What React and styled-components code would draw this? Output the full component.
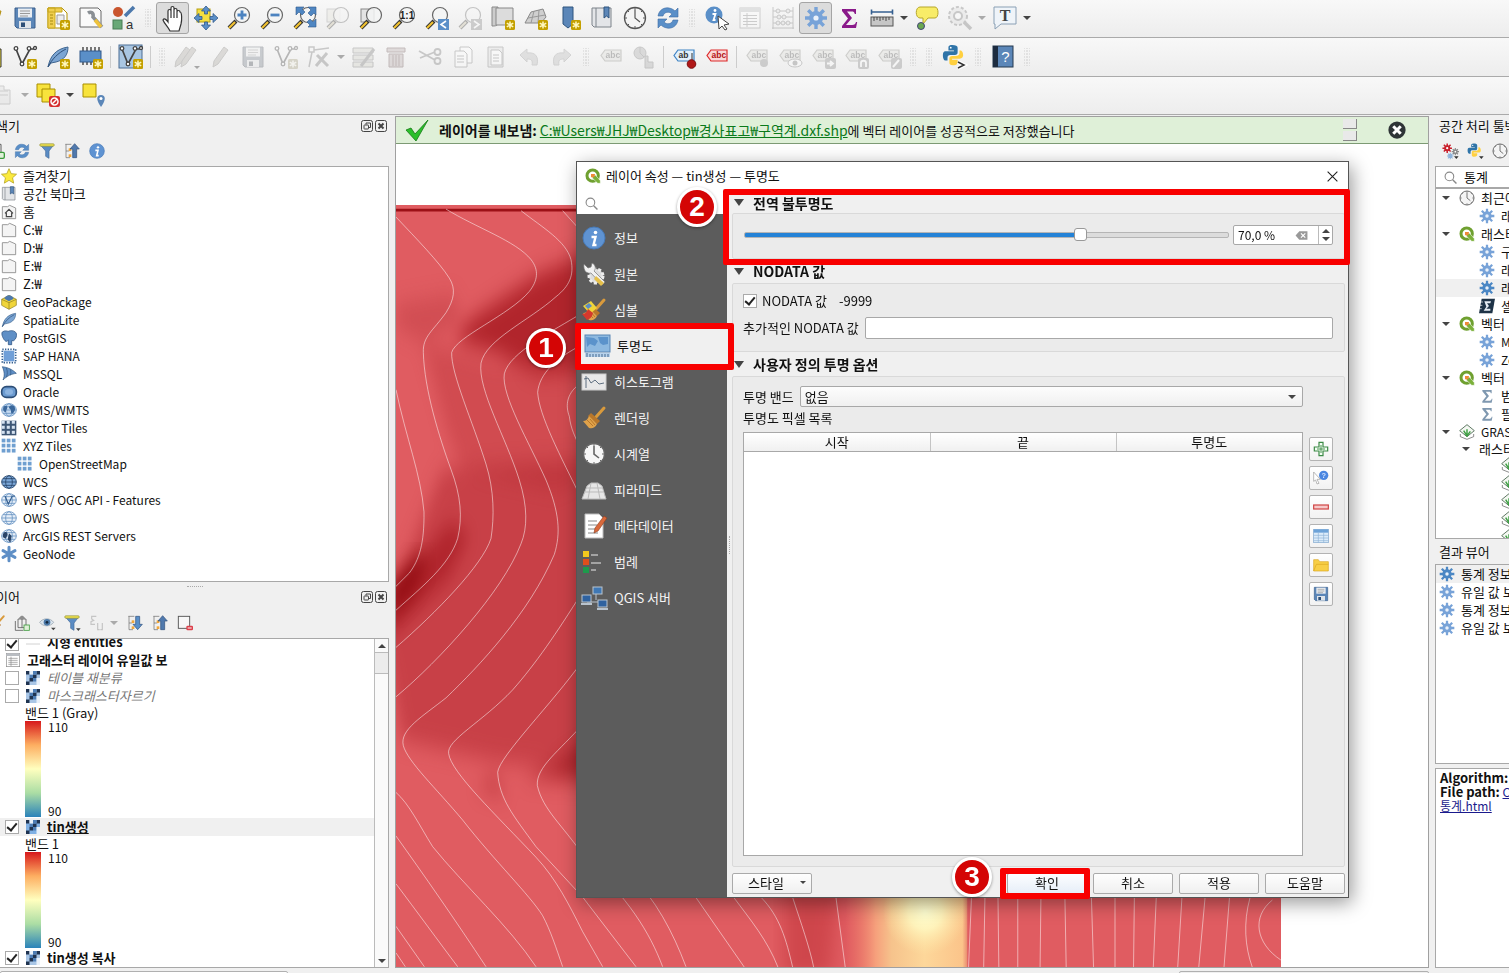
import styled, { createGlobalStyle, css } from 'styled-components';

const GlobalStyle = createGlobalStyle`
	* {
		box-sizing: border-box;
	}

	body {
		margin: 0;
		overflow: hidden;
		background: #f0f0f0;
	}

	body, button, input, select, table {
		font-family: 'Noto Sans CJK KR', 'Liberation Sans', sans-serif;
		font-size: 13px;
		line-height: 18px;
		color: #111;
	}

	button {
		padding: 0;
		border: 0;
		background: none;
	}
`;

/* ---------- icons ---------- */

const Svg = styled.svg`
	display: block;
	flex: none;
	overflow: visible;
	width: ${({ $size }) => $size}px;
	height: ${({ $size }) => $size}px;
	${({ $dim }) =>
		$dim &&
		css`
			filter: grayscale(0.8);
			opacity: 0.35;
		`}

	text {
		font-family: 'Liberation Sans', sans-serif;
	}
`;

const NewBadge = () => (
	<g>
		<rect x='14' y='14' width='10' height='10' rx='1.5' fill='#c4a000' />
		<path d='M19 15.5v7M15.8 17.2l6.4 3.6M22.2 17.2l-6.4 3.6' stroke='#fff8c0' strokeWidth='1.5' />
	</g>
);

const Lens = ({ children }) => (
	<g>
		<path d='M9 15l-7 7' stroke='#333' strokeWidth='4' />
		<path d='M8 16l-6 6' stroke='#f2c230' strokeWidth='2.2' />
		<circle cx='15' cy='9' r='7.5' fill='#f3f5f5' fillOpacity='.85' stroke='#666' strokeWidth='1.2' />
		{children}
	</g>
);

const Gear = ({ fill = '#6d9bd3', hole = '#fff' }) => (
	<g stroke={fill}>
		<path d='M12 1v22M1 12h22M4.2 4.2l15.6 15.6M19.8 4.2L4.2 19.8' strokeWidth='3.4' />
		<circle cx='12' cy='12' r='7' fill={fill} stroke='none' />
		<circle cx='12' cy='12' r='2.6' fill={hole} stroke='none' />
	</g>
);

const Refresh = () => (
	<g fill='#5a8fc8' stroke='#3c6ca5' strokeWidth='.6'>
		<path d='M2 10C3 4 8 1 13 2c3 .5 5 2 6 3l3-3v9h-9l3-3C13 5 8 6 7 10z' />
		<path d='M22 14c-1 6-6 9-11 8-3-.5-5-2-6-3l-3 3v-9h9l-3 3c3 3 8 2 9-2z' />
	</g>
);

const Python = () => (
	<g>
		<path
			d='M11 1C7 1 7 3 7 4v3h6v1H4c-3 0-3 3-3 5s1 5 3 5h2v-3c0-2 1-3 3-3h5c2 0 3-1 3-3V4c0-2-2-3-6-3z'
			fill='#2f74a8'
		/>
		<path
			d='M12 23c4 0 5-2 5-3v-3h-6v-1h8c3 0 4-2 4-4s-1-5-3-5h-1v3c0 2-2 3-4 3h-4c-2 0-3 1-3 3v4c0 2 1 3 4 3z'
			fill='#ffd040'
		/>
		<circle cx='9.500' cy='4' r='1' fill='#fff' />
	</g>
);

const Label = ({ fill = '#dcdcc4', stroke = '#8c8c6c', text = 'abc', color = '#555' }) => (
	<g>
		<path d='M6 5h16v11H6l-4-5.500z' fill={fill} stroke={stroke} strokeWidth='1.2' />
		<text x='6.500' y='13' fontSize='8.500' fontWeight='bold' fill={color}>
			{text}
		</text>
	</g>
);

const Globe = ({ fill = '#e7eff8', dark }) => (
	<g fill='none' stroke={dark ? '#27466b' : '#6b95c4'} strokeWidth='1.3'>
		<ellipse cx='12' cy='12' rx='11' ry='9.500' fill={fill} />
		<ellipse cx='12' cy='12' rx='5' ry='9.500' />
		<path d='M1 12h22M3 7h18M3 17h18' />
	</g>
);

const TreeLines = () => (
	<g fill='#f3a73a' stroke='#666' strokeWidth='1'>
		<path d='M2 2h9M3 2v20h6M3 12h5' fill='none' />
		<rect x='7' y='8' width='4' height='4' stroke='none' />
		<rect x='7' y='17' width='4' height='4' stroke='none' />
	</g>
);

const Floppy = ({ fill = '#5b86b8' }) => (
	<g>
		<path d='M2 2h20v20H4l-2-2z' fill={fill} stroke='#3a5f8c' />
		<rect x='5' y='2.500' width='14' height='9' fill='#e9edf2' />
		<path d='M7 5h10M7 7.500h10M7 10h8' stroke='#999' />
		<rect x='6' y='15' width='12' height='7' fill='#dfe4ea' />
		<rect x='8' y='16.500' width='4' height='4.500' fill='#2d4f78' />
	</g>
);

const Brush = () => (
	<g>
		<path d='M22 2l-8 9' stroke='#d99a3c' strokeWidth='3' strokeLinecap='round' />
		<path d='M9 7l9 8-3 3-9-8z' fill='#b9772a' />
		<path d='M7 10l8 8c-2 4-5 5-8 4l-6-7c3 0 5-2 6-5z' fill='#e0a24a' />
		<path d='M5 14l6 6M8 13l5 6' stroke='#b9772a' />
	</g>
);

const Clock = ({ fill = '#f4f4f4', stroke = '#555', width = 1.6 }) => (
	<g fill='none' stroke={stroke}>
		<circle cx='12' cy='12' r='10.500' fill={fill} strokeWidth='1.3' />
		<path d='M12 4v8l5 4' strokeWidth={width} />
		<path d='M12 2v2M12 20v2M2 12h2M20 12h2M5 5l1 1M18 18l1 1M19 5l-1 1M6 18l-1 1' />
	</g>
);

const Info = () => (
	<g>
		<circle cx='12' cy='12' r='11' fill='#5f93d2' stroke='#477ab8' />
		<circle cx='13.500' cy='6.500' r='1.800' fill='#fff' />
		<path d='M9.500 11h4l-2 8h3' fill='none' stroke='#fff' strokeWidth='2.400' />
	</g>
);

const Q = () => (
	<g>
		<circle cx='11.500' cy='11.500' r='8.500' fill='#fff' stroke='#6fa030' strokeWidth='4.500' />
		<path d='M11 11h5l7 8v4h-4l-8-8z' fill='#7bb03a' stroke='#fff' strokeWidth='.8' />
		<path d='M9 9h6l-1 5h-5z' fill='#ee8a3a' />
	</g>
);

const Tiles = ({ gap = 2, fill = '#6f9fd0' }) => (
	<g fill={fill}>
		{[0, 1, 2].map((r) =>
			[0, 1, 2].map((c) => (
				<rect key={`${r}${c}`} x={1 + c * 7.6} y={1 + r * 7.6} width={7.6 - gap} height={7.6 - gap} />
			)),
		)}
	</g>
);

const Leaf = () => (
	<g>
		<path d='M12 1l11 9-11 9-11-9z' fill='#f4f8f2' stroke='#55705a' strokeWidth='1.4' />
		<path d='M12 19V8M12 18L7 10M12 18l5-7' fill='none' stroke='#3fa044' strokeWidth='2.200' />
		<path d='M2 15v4l10 4 10-4v-4' fill='none' stroke='#555' />
	</g>
);

const Feather = () => (
	<g>
		<path d='M2 22C4 12 9 4 22 2c0 8-4 13-12 15l-5 1z' fill='#7ba5d3' stroke='#3f658f' />
		<path d='M2 22C6 14 12 8 20 4' fill='none' stroke='#2d4f78' />
	</g>
);

const VShape = () => (
	<g fill='#fff' stroke='#444' strokeWidth='1.300'>
		<path d='M3 4l6 15 8-15 5 0' fill='none' strokeWidth='1.700' />
		<circle cx='3' cy='3.500' r='1.800' />
		<circle cx='9' cy='19' r='1.800' />
		<circle cx='16' cy='3.500' r='1.800' />
		<circle cx='22' cy='3' r='1.500' />
	</g>
);

const Raster = ({ light = '#a9c6e6' }) => (
	<g>
		<rect width='24' height='24' fill={light} />
		<path d='M0 0h6v6H0zM12 6h6v6h-6zM6 12h6v6H6zM18 0h6v6h-6zM0 18h6v6H0z' fill='#1f3350' />
		<path d='M6 6h6v6H6zM12 12h6v6h-6zM12 0h6v6h-6z' fill='#4d7db5' />
		<path d='M6 0h6v6H6zM18 12h6v12h-6z' fill='#e9f1fa' />
	</g>
);

const Funnel = () => (
	<g>
		<path d='M2 3h20l-7 9v11l-5-3v-8z' fill='#5b8cc4' stroke='#41699a' />
		<rect x='1' y='1' width='22' height='4' rx='2' fill='#e3d84c' stroke='#8b8b3c' strokeWidth='.8' />
	</g>
);

const Book = () => (
	<g>
		<path d='M2 2h19v19H4l-2-2z' fill='#e3e5e8' stroke='#7d838a' />
		<path d='M6 2v19' stroke='#7d838a' />
		<path d='M14 1h5v11l-2.500-2-2.500 2z' fill='#5b86b8' stroke='#2f557f' />
	</g>
);

const Pencil = ({ x = 0 }) => (
	<path d={`M${5 + x} 22l1-6L${16 + x} 2l4 3-10 14z`} fill='#b9a98b' stroke='#8b8070' />
);

const Sheet = () => (
	<g>
		<rect x='2' y='2' width='20' height='20' fill='#fff' stroke='#888' />
		<rect x='2' y='2' width='20' height='4' fill='#b9bdc2' />
		<path d='M5 9.500h14M5 12.500h14M5 15.500h14M5 18.500h14M9 7v14' stroke='#888' />
	</g>
);

const Sigma = ({ fill = '#8a1a8a' }) => (
	<path
		d='M5 3h14v5h-1.200c-.5-2-1.300-2.500-3-2.500H10l5 6.500-6 7h6c2.500 0 3.500-1 4-3h1.200L19 22H5v-2l6-7.500L5 5z'
		fill={fill}
	/>
);

const Folder = ({ children }) => (
	<g>
		<path d='M2 4h8l3-2 9 4v16H2z' fill='#f4f4f4' stroke='#8b8b8b' strokeWidth='1.300' />
		{children}
	</g>
);

const ICONS = {
	folder: <path d='M2 5h20l-4 14H2z' fill='#eec73e' stroke='#b08d10' />,
	save: <Floppy />,
	layoutNew: (
		<g>
			<path d='M2 2h14l5 5v15H2z' fill='#fff' stroke='#b39200' />
			<path d='M2 2h7v20H2zM2 2h14v4H2z' fill='#f0cf50' stroke='#c9a820' />
			<path d='M4 9h3M4 12h3M4 15h3M4 18h3' stroke='#a58a10' />
			<path d='M11 9h7v9h-7z' fill='#eee' stroke='#999' />
			<NewBadge />
		</g>
	),
	layoutManager: (
		<g>
			<path d='M1 2h18l3 3v16H1z' fill='#fafafa' stroke='#666' />
			<path d='M9 7c3-2 6 0 5 4l9 10' fill='none' stroke='#8a8f94' strokeWidth='3.500' />
			<path d='M16 14l6 7' stroke='#eec23c' strokeWidth='3.500' />
		</g>
	),
	style: (
		<g>
			<circle cx='6' cy='6' r='5' fill='#c9552e' />
			<rect x='1' y='14' width='9' height='9' fill='#69a877' stroke='#497c55' />
			<path d='M13 10l9-9' stroke='#4d79ac' strokeWidth='3.500' />
			<text x='14' y='23' fontSize='13' fill='#333'>
				a
			</text>
		</g>
	),
	hand: (
		<path
			d='M7 14V5c0-2 3-2 3 0V2c0-2 3-2 3 0v2c0-2 3-2 3 0v2c0-2 3-2 3 0 2 0 2 8 1 12l-2 7H9c-2-4-6-8-7-11 1-2 3-1 5 2zM10 5v7M13 4v8M16 6v6'
			fill='#fff'
			stroke='#333'
			strokeWidth='1.200'
		/>
	),
	pan: (
		<g>
			<rect x='3' y='3' width='13' height='13' fill='#f5df40' stroke='#b59f10' />
			<path
				d='M12 0l4.500 5h-3v3h-3V5h-3zM12 24l4.500-5h-3v-3h-3v3h-3zM0 12l5-4.500v3h3v3H5v3zM24 12l-5-4.500v3h-3v3h3v3z'
				fill='#5a8fc8'
				stroke='#31598a'
				strokeWidth='.8'
			/>
		</g>
	),
	zoomIn: (
		<Lens>
			<path d='M15 4.500v9M10.500 9h9' stroke='#4c83c0' strokeWidth='2.800' />
		</Lens>
	),
	zoomOut: (
		<Lens>
			<path d='M10.500 9h9' stroke='#4c83c0' strokeWidth='2.800' />
		</Lens>
	),
	zoomFull: (
		<g>
			<Lens />
			<path
				d='M3 1h8L9 3l3 3-3 3-3-3-3 3zM23 1v8l-2-2-3 3-3-3 3-3-3-3zM23 21h-8l2-2-3-3 3-3 3 3 3-3z'
				fill='#4f86c2'
				stroke='#31598a'
				strokeWidth='.6'
			/>
		</g>
	),
	zoomSelection: (
		<g>
			<rect x='1' y='3' width='13' height='13' fill='#e8e4b8' stroke='#999' />
			<Lens />
		</g>
	),
	zoomLayer: (
		<g>
			<rect x='2' y='3' width='13' height='13' fill='#e3e3e3' stroke='#888' />
			<Lens />
		</g>
	),
	zoomNative: (
		<Lens>
			<text x='15' y='12.500' fontSize='10' fontWeight='bold' textAnchor='middle' fill='#222'>
				1:1
			</text>
		</Lens>
	),
	zoomLast: (
		<g>
			<Lens />
			<rect x='13' y='13' width='11' height='11' fill='#5a8fc8' />
			<path d='M21 15l-5 3.500 5 3.500' fill='none' stroke='#fff' strokeWidth='1.600' />
		</g>
	),
	zoomNext: (
		<g>
			<Lens />
			<rect x='13' y='13' width='11' height='11' fill='#888' />
			<path d='M16 15l5 3.500-5 3.500' fill='none' stroke='#fff' strokeWidth='1.600' />
		</g>
	),
	mapNew: (
		<g>
			<path d='M1 1h6v16c0 3-3 3-6 3z' fill='#ccc' stroke='#888' />
			<path d='M5 2h17v17H5z' fill='#dcdcdc' stroke='#888' />
			<NewBadge />
		</g>
	),
	view3dNew: (
		<g>
			<path d='M7 6l12-3 3 8-5 6-16 0z' fill='#cfcfcf' stroke='#888' />
			<path d='M4 12l17-3M10 5l-3 12M15 4l-1 13' stroke='#999' />
			<NewBadge />
		</g>
	),
	bookmarkNew: (
		<g>
			<path d='M6 1h10v17l-5 4-5-4z' fill='#5b86b8' stroke='#2f557f' />
			<NewBadge />
		</g>
	),
	bookmarks: <Book />,
	clock: <Clock width={1.2} />,
	refresh: <Refresh />,
	identify: (
		<g>
			<circle cx='9' cy='9' r='8.500' fill='#5a8fc8' />
			<circle cx='10' cy='4.500' r='1.400' fill='#fff' />
			<path d='M7.500 8h3l-2 6h2' fill='none' stroke='#fff' strokeWidth='1.800' />
			<path d='M13 10l11 8-5 1 3 4-2 1-3-4-3 3z' fill='#fff' stroke='#444' />
		</g>
	),
	table: <Sheet />,
	abacus: (
		<g fill='#ddd' stroke='#777'>
			<path d='M2 1v22M22 1v22M2 5h20M2 11h20M2 17h20M1 22h22' fill='none' />
			<circle cx='7' cy='5' r='2' />
			<circle cx='17' cy='5' r='2' />
			<circle cx='8' cy='11' r='2' />
			<circle cx='13' cy='11' r='2' />
			<circle cx='7' cy='17' r='2' />
			<circle cx='12' cy='17' r='2' />
			<circle cx='17' cy='17' r='2' />
		</g>
	),
	gear: <Gear fill='#78a3d8' hole='#eaf1fa' />,
	gearStrong: <Gear fill='#4b87c4' hole='#eaf1fa' />,
	sigma: <Sigma />,
	sigmaBlue: <Sigma fill='#7f98b0' />,
	measure: (
		<g>
			<path d='M1 6h22M1.500 3.500v5M22.500 3.500v5' stroke='#355f90' strokeWidth='1.600' />
			<rect x='1' y='11' width='22' height='9' fill='#c6c6c6' stroke='#555' />
			<path d='M4 11v4M7 11v3M10 11v4M13 11v3M16 11v4M19 11v3' stroke='#444' />
		</g>
	),
	tips: (
		<g>
			<path d='M5 1h15c4 0 4 11 0 11h-7l-5 6 0-6H5c-5 0-5-11 0-11z' fill='#f8ec68' stroke='#b6a72a' />
			<circle cx='6' cy='20' r='3.500' fill='#6aa84f' stroke='#447' />
		</g>
	),
	zoomGear: (
		<g>
			<path d='M15 15l8 8' stroke='#777' strokeWidth='3.500' />
			<circle cx='10' cy='10' r='9' fill='#ddd' stroke='#777' strokeWidth='2' strokeDasharray='3 2' />
			<circle cx='10' cy='10' r='4' fill='#fff' stroke='#777' strokeWidth='2' />
		</g>
	),
	textNote: (
		<g>
			<path d='M1 1h22v17H8l-6 5v-5H1z' fill='#eff4f9' stroke='#8aa0b5' />
			<text
				x='12'
				y='15'
				fontSize='16'
				fontWeight='bold'
				textAnchor='middle'
				fill='#444'
				style={{ fontFamily: 'Liberation Serif' }}
			>
				T
			</text>
		</g>
	),
	layerYellow: <path d='M2 4h20v18H2z' fill='#f2df3e' stroke='#333' />,
	vectorNew: (
		<g>
			<VShape />
			<NewBadge />
		</g>
	),
	featherNew: (
		<g>
			<Feather />
			<NewBadge />
		</g>
	),
	chipNew: (
		<g>
			<path d='M4 2v18M8 2v18M12 2v18M16 2v18M20 2v18' stroke='#333' strokeWidth='1.300' />
			<rect x='1' y='6' width='21' height='11' fill='#5a8fc8' stroke='#31598a' />
			<NewBadge />
		</g>
	),
	virtualNew: (
		<g>
			<rect x='0' y='0' width='23' height='23' fill='#a9c6e2' stroke='#4a6d94' />
			<VShape />
			<NewBadge />
		</g>
	),
	pencils: (
		<g>
			<Pencil x={-5} />
			<Pencil x={1} />
			<path d='M19 21h6l-3 3z' fill='#222' />
		</g>
	),
	pencil: <Pencil />,
	vertex: (
		<g fill='none' stroke='#777' strokeWidth='1.500'>
			<path d='M2 2h5v5H2zM7 5l15-2M5 7L2 22' />
			<path d='M20 8L9 21M10 10l11 11' strokeWidth='3' />
		</g>
	),
	modify: (
		<g>
			<path d='M1 3h20v5H1zM1 10h20v5H1zM1 17h20v5H1z' fill='#d5d3a8' stroke='#777' />
			<path d='M9 21L22 4' stroke='#777' strokeWidth='3' />
		</g>
	),
	trash: (
		<g fill='#e0a0a0' stroke='#b04040'>
			<path d='M2 3h18v4H2zM4 9h14v13H4z' />
			<path d='M8 10v11M11 10v11M14 10v11' />
		</g>
	),
	cut: (
		<g fill='none' stroke='#777' strokeWidth='1.800'>
			<path d='M1 6l16 9M2 13l15-6' />
			<circle cx='19.500' cy='7' r='3' />
			<circle cx='19.500' cy='16' r='3' />
		</g>
	),
	copy: (
		<g fill='#fff' stroke='#777'>
			<path d='M9 2h9l3 3v13H9z' />
			<path d='M4 6h9l3 3v13H4zM6 11h7M6 14h7M6 17h7' />
		</g>
	),
	paste: (
		<g fill='#fff' stroke='#777'>
			<path d='M4 2h15v20H4z' fill='#ddd' />
			<path d='M7 5h8l3 3v12H7zM9 10h6M9 13h6M9 16h6' />
		</g>
	),
	undo: <path d='M3 10l7-6v4c8-1 12 3 10 12h-5c1-5-1-6-5-6v3z' fill='#bbb' stroke='#999' />,
	redo: <path d='M21 10l-7-6v4c-8-1-12 3-10 12h5c-1-5 1-6 5-6v3z' fill='#bbb' stroke='#999' />,
	label: <Label />,
	diagram: (
		<g fill='#aaa' stroke='#777'>
			<circle cx='8' cy='8' r='6' />
			<path d='M8 8V2M8 8l4 4' />
			<path d='M13 11h3v6h5v6h-8z' />
		</g>
	),
	labelPin: (
		<g>
			<Label fill='#e3f0fb' stroke='#3f83c4' text='ab' color='#333' />
			<path d='M20 8v9' stroke='#333' />
			<circle cx='19.500' cy='19' r='4.300' fill='#b01818' stroke='#7c0e0e' />
		</g>
	),
	labelRed: <Label fill='#f9d8d8' stroke='#dd2a2a' color='#b41414' />,
	labelPinGrey: (
		<g>
			<Label />
			<circle cx='19' cy='18' r='4' fill='#888' />
		</g>
	),
	labelEye: (
		<g>
			<Label />
			<ellipse cx='17' cy='18' rx='7' ry='4' fill='#fff' stroke='#777' />
			<circle cx='17' cy='18' r='2.500' fill='#777' />
		</g>
	),
	labelBox: (
		<g>
			<Label />
			<rect x='14' y='13' width='11' height='11' rx='2' fill='#888' />
			<path d='M16 18.500h6M19 16l3 2.500-3 2.500' fill='none' stroke='#fff' strokeWidth='1.800' />
		</g>
	),
	labelTurn: (
		<g>
			<Label />
			<rect x='14' y='13' width='11' height='11' rx='2' fill='#888' />
			<path d='M17 22v-4c0-3 5-3 5 0v4' fill='none' stroke='#fff' strokeWidth='1.800' />
		</g>
	),
	labelEdit: (
		<g>
			<Label />
			<rect x='14' y='13' width='11' height='11' rx='2' fill='#888' />
			<path d='M16 22l6-7' stroke='#fff' strokeWidth='2' />
		</g>
	),
	python: <Python />,
	pythonConsole: (
		<g>
			<g transform='translate(0 -1) scale(.92)'>
				<Python />
			</g>
			<path d='M16 17l6 3-6 3' fill='none' stroke='#fff' strokeWidth='4' />
			<path d='M16 17l6 3-6 3' fill='none' stroke='#333' strokeWidth='1.500' />
		</g>
	),
	help: (
		<g>
			<rect x='2' y='1' width='20' height='21' fill='#5b86b8' stroke='#24384f' />
			<rect x='2' y='1' width='5' height='21' fill='#1d2c40' />
			<text x='14.500' y='17' fontSize='15' textAnchor='middle' fill='#fff'>
				?
			</text>
		</g>
	),
	stackGrey: <path d='M0 3h14v4h6v14H2v-4H0zM2 8h16M2 12h16' fill='#ddd' stroke='#888' />,
	deselect: (
		<g>
			<path d='M1 1h13v13H1z' fill='#f8e33c' stroke='#a98f00' />
			<path d='M6 6h13v13H6z' fill='#f8e33c' stroke='#a98f00' />
			<rect x='13' y='13' width='11' height='11' rx='2' fill='#d53030' />
			<circle cx='18.500' cy='18.500' r='3.500' fill='none' stroke='#fff' strokeWidth='1.500' />
			<path d='M16 21l5-5' stroke='#fff' strokeWidth='1.500' />
		</g>
	),
	selectPlace: (
		<g>
			<path d='M2 1h13v13H2z' fill='#f8e33c' stroke='#a98f00' />
			<path d='M20 12c5 0 5 5 0 12-5-7-5-12 0-12z' fill='#5b86b8' />
			<circle cx='20' cy='15.500' r='1.500' fill='#fff' />
		</g>
	),
	addGreen: (
		<g>
			<path d='M6 2h12v18H6' fill='#f4f4f4' stroke='#555' strokeWidth='1.400' />
			<rect x='14' y='14' width='9' height='9' rx='2' fill='#dff0d8' stroke='#3b9a3b' strokeWidth='2' />
		</g>
	),
	funnel: <Funnel />,
	collapse: (
		<g>
			<TreeLines />
			<path d='M16 1l7 8h-4v13h-6V9H9z' fill='#5079ad' stroke='#2f4f7a' />
		</g>
	),
	expand: (
		<g>
			<TreeLines />
			<path d='M16 22l7-8h-4V2h-6v12H9z' fill='#5a8fc8' stroke='#2f4f7a' />
		</g>
	),
	info: <Info />,
	star: (
		<path
			d='M12 1l3.300 7.500 8 .8-6 5.400 1.700 8L12 18.500 5 22.700l1.700-8-6-5.400 8-.8z'
			fill='#fbea3e'
			stroke='#b5a322'
			strokeWidth='1.200'
		/>
	),
	home: (
		<Folder>
			<path d='M6 14l6-6 6 6M8 13v6h8v-6' fill='none' stroke='#444' strokeWidth='1.800' />
		</Folder>
	),
	drive: <Folder />,
	geopackage: (
		<g>
			<path d='M1 8l11-6 11 6v9l-11 6-11-6z' fill='#f0d53a' stroke='#8b7a20' />
			<path d='M12 13v10M1 8l11 5 11-5' fill='none' stroke='#8b7a20' />
			<path d='M5 7c2-7 12-7 14 0l-7 4z' fill='#4d79ac' />
		</g>
	),
	feather: <Feather />,
	postgis: (
		<path
			d='M2 3c4-3 7-1 9-1 4-2 10-1 12 3 1 5-1 9-4 11l-3 0v6h-5v-7c-2 2-3 3-5 1C3 13 0 6 2 3z'
			fill='#5f8fc6'
			stroke='#365d8c'
			strokeWidth='1.300'
		/>
	),
	hana: (
		<g>
			<rect x='2' y='2' width='20' height='20' fill='none' stroke='#355f90' strokeWidth='2.500' strokeDasharray='2 2' />
			<rect x='4' y='4' width='16' height='16' fill='#6f9fd8' />
		</g>
	),
	mssql: (
		<path
			d='M2 1c9 1 16 5 21 10-7 1-13 3-20 10 3-7 2-13-1-20zM8 3c2 5 2 9 0 14M14 5c1 3 1 6 0 9'
			fill='#5f8fc6'
			stroke='#2f557f'
		/>
	),
	oracle: (
		<g>
			<rect x='1' y='4' width='22' height='16' rx='7' fill='#6c9bd0' stroke='#2c4d76' strokeWidth='2.500' />
			<rect x='6' y='8' width='12' height='8' rx='4' fill='#8db4e0' />
		</g>
	),
	wms: (
		<g>
			<Globe fill='#c6daf0' />
			<path d='M4 7c4-3 7 0 5 3s-1 6-3 5-4-5-2-8zM13 6c5-3 9 1 8 6-2 4-3 6-5 5s0-4-2-6-3-3-1-5z' fill='#3b689c' />
		</g>
	),
	vectorTiles: (
		<g>
			<rect x='1' y='1' width='22' height='22' fill='#3d5675' />
			<Tiles gap={3} fill='#d5e2f0' />
		</g>
	),
	xyz: <Tiles />,
	wcs: <Globe fill='#7ba7d8' dark />,
	wfs: (
		<g>
			<Globe />
			<path d='M6 6l5 12 6-12h4' fill='none' stroke='#355f90' strokeWidth='1.800' />
		</g>
	),
	ows: <Globe />,
	arcgis: (
		<g>
			<Globe />
			<path d='M3 9c3-5 7-3 7 1l-3 6-4-2zM12 8l4 4-2 10-4-5z' fill='#2b4568' />
		</g>
	),
	geonode: (
		<path d='M12 2v20M3 7l18 10M21 7L3 17' stroke='#5f8fc6' strokeWidth='4.500' strokeLinecap='round' />
	),
	brush: <Brush />,
	addGroup: (
		<g fill='none' stroke='#555' strokeWidth='1.200'>
			<path d='M2 9v14h12M6 6v13h12V6zM9 6V3h6v3M12 1v18' />
			<rect x='15' y='15' width='8' height='8' fill='#dff0d8' stroke='#3b9a3b' />
		</g>
	),
	eye: (
		<g>
			<path d='M1 11C6 4 17 4 22 11c-5 7-16 7-21 0z' fill='#dbe5ee' stroke='#8a98a5' />
			<circle cx='12' cy='11' r='5' fill='#4a78a8' />
			<circle cx='12' cy='11' r='2' fill='#16283c' />
			<path d='M18 19h7l-3.500 4z' fill='#444' />
		</g>
	),
	funnelMenu: (
		<g>
			<Funnel />
			<path d='M18 20h7l-3.500 4z' fill='#444' />
		</g>
	),
	expression: (
		<g fill='none' stroke='#777' strokeWidth='1.800'>
			<path d='M11 2H4v4l3 2-4 2v4h6M13 12v10h3M20 12v10h-3' />
		</g>
	),
	removeLayer: (
		<g>
			<rect x='2' y='2' width='17' height='18' fill='#f7f7f7' stroke='#555' strokeWidth='1.400' />
			<rect x='14' y='16' width='10' height='7' rx='2' fill='#dc3f4a' />
			<path d='M16 19.500h6' stroke='#fff' strokeWidth='1.500' />
		</g>
	),
	raster: <Raster />,
	rasterActive: <Raster light='#7fb0e4' />,
	line: <path d='M0 12h24' stroke='#ccc' strokeWidth='1.500' />,
	check: <path d='M1 12l5-2 4 6L23 2 11 23z' fill='#2bbf2b' stroke='#157a15' strokeWidth='.8' />,
	q: <Q />,
	search: (
		<g fill='none' stroke='#888' strokeWidth='2'>
			<circle cx='10' cy='10' r='8' />
			<path d='M16 16l7 7' strokeWidth='2.600' />
		</g>
	),
	source: (
		<g>
			<circle cx='14' cy='14' r='7' fill='#ddd' stroke='#eee' strokeWidth='3' strokeDasharray='3 2' />
			<path
				d='M2 2l4 4 3-1 1-4c4 2 4 6 2 8l11 11-3 3L9 11C5 12 1 9 2 2z'
				fill='#f1f1f1'
				stroke='#777'
				strokeWidth='.7'
			/>
			<path d='M14 14l8 7-3 3-7-7z' fill='#e6c04a' />
		</g>
	),
	symbol: (
		<g>
			<Brush />
			<path d='M1 8l8-5 6 7-7 6z' fill='#efd43a' />
			<path d='M0 16c3 0 5-2 6-5l5 4c-1 4-3 6-6 7z' fill='#d5392d' />
			<path d='M3 8l4-3 3 3-4 3z' fill='#5b8cc4' />
		</g>
	),
	transparency: (
		<g>
			<rect x='0' y='1' width='25' height='17' fill='#8db9e0' stroke='#5885b4' />
			<path d='M1 3l8 1 4 3-3 5-5-2-3 3zM13 3h10v7l-5 1-3-2z' fill='#5b93cb' />
			<path d='M0 19h25v4H0z' fill='#b9d3ec' />
			<path d='M2 19v4M5 20v3M8 20v3M11 20v3M14 20v3M17 20v3M20 20v3M23 20v3' stroke='#44688f' />
		</g>
	),
	histogram: (
		<g>
			<rect x='0' y='4' width='24' height='16' fill='#e8e8e8' stroke='#ccc' />
			<path d='M4 6v12M2 9l4-1 3 5 4-3 4 4 5-1' fill='none' stroke='#5f6f80' />
		</g>
	),
	clockWhite: <Clock fill='#f6f6f6' stroke='#666' />,
	pyramids: (
		<g>
			<path d='M5 8l4-3h7l4 3 4 13H0z' fill='#e6e6e6' stroke='#bbb' />
			<path d='M3 14h18M9 5l-3 16M15 5l3 16M4 10h16' stroke='#bbb' />
		</g>
	),
	metadata: (
		<g>
			<path d='M3 0h14l4 4v20H3z' fill='#fff' stroke='#bbb' />
			<path d='M6 7h9M6 11h9M6 15h7M6 19h10' stroke='#888' />
			<path d='M22 2l3 2-9 13-4 2 1-5z' fill='#d9693c' stroke='#8b3c1c' strokeWidth='.6' />
		</g>
	),
	legend: (
		<g>
			<rect x='1' y='1' width='6' height='6' fill='#f2c81e' />
			<rect x='1' y='9' width='6' height='6' fill='#e04e1c' />
			<rect x='1' y='17' width='6' height='6' fill='#1e9a4c' />
			<path d='M9 5h7M9 13h10M9 20h5' stroke='#bbb' strokeWidth='1.600' />
		</g>
	),
	server: (
		<g stroke='#b9c3cd'>
			<path d='M14 8v6M5 16h14' />
			<rect x='11' y='1' width='9' height='7' fill='#3f78b5' />
			<rect x='0' y='9' width='9' height='7' fill='#2f62a0' />
			<rect x='16' y='14' width='9' height='7' fill='#2f62a0' />
			<path d='M-1 18h11M15 23h11' strokeWidth='2' />
		</g>
	),
	plus: (
		<g fill='none' stroke='#3c8a46'>
			<path d='M9 2h6v7h7v6h-7v7H9v-7H2V9h7z' fill='#f4fff4' strokeWidth='1.800' />
			<path d='M12 6v12M6 12h12' strokeWidth='1.400' />
		</g>
	),
	pick: (
		<g>
			<path d='M1 3l10 11-5 0 3 6-3 1-2-6-3 2z' fill='#fff' stroke='#999' />
			<circle cx='16' cy='8' r='7' fill='#4a86e0' />
			<text x='16' y='12' fontSize='11' fontWeight='bold' textAnchor='middle' fill='#cfe2ff'>
				?
			</text>
		</g>
	),
	minus: <rect x='1' y='9' width='22' height='6' fill='#f6c9c9' stroke='#d04545' strokeWidth='1.800' />,
	tableBlue: (
		<g>
			<rect x='1' y='2' width='22' height='20' fill='#dcecfa' stroke='#7fa6cc' />
			<rect x='1' y='2' width='22' height='5' fill='#6da3d8' />
			<path d='M1 11h22M1 15h22M1 19h22M8 7v15M16 7v15' stroke='#8fb4d8' />
		</g>
	),
	folderOpen: <path d='M1 4h7l2 3h13v14H1zM1 21l4-10h18' fill='#f8cf46' stroke='#dba820' />,
	gears: (
		<g>
			<g transform='scale(.65)'>
				<Gear fill='#c81e2a' hole='#fff' />
			</g>
			<g transform='translate(14 7) scale(.5)'>
				<Gear fill='#888' hole='#fff' />
			</g>
			<g transform='translate(7 14) scale(.45)'>
				<Gear fill='#8fb4dc' hole='#8fb4dc' />
			</g>
			<path d='M18 20h7l-3.500 4z' fill='#333' />
		</g>
	),
	pythonMenu: (
		<g>
			<g transform='scale(.9)'>
				<Python />
			</g>
			<path d='M18 20h7l-3.500 4z' fill='#333' />
		</g>
	),
	zonal: (
		<g>
			<path d='M4 1h20l-4 22H0z' fill='#1e3347' />
			<path d='M8 5h10l-1 3h-5l3 4-4 4h6v3H7l4-6z' fill='#e6edf4' />
			<path d='M0 6h6M0 11h5M0 16h4' stroke='#fff' />
		</g>
	),
	leaf: <Leaf />,
	closeRound: (
		<g>
			<circle cx='12' cy='12' r='11.500' fill='#2e3436' />
			<path d='M7 7l10 10M17 7L7 17' stroke='#fff' strokeWidth='4' />
		</g>
	),
	close: <path d='M3 3l18 18M21 3L3 21' stroke='#222' strokeWidth='2' />,
	dockFloat: (
		<g fill='none' stroke='#444' strokeWidth='2'>
			<rect x='1' y='1' width='22' height='22' rx='4' />
			<rect x='6' y='10' width='9' height='8' rx='1' />
			<path d='M10 9V6h9v9h-3' />
		</g>
	),
	dockClose: (
		<g fill='none' stroke='#444' strokeWidth='2'>
			<rect x='1' y='1' width='22' height='22' rx='4' />
			<path d='M7 7l10 10M17 7L7 17' strokeWidth='4' />
		</g>
	),
	clear: (
		<g>
			<path d='M8 4h15v16H8l-7-8z' fill='#999' />
			<path d='M11 8l8 8M19 8l-8 8' stroke='#fff' strokeWidth='2.200' />
		</g>
	),
};

const Icon = ({ name, size = 24, dim }) => (
	<Svg viewBox='0 0 24 24' $size={size} $dim={dim} aria-hidden='true'>
		{ICONS[name]}
	</Svg>
);

/* ---------- shared parts ---------- */

const Arrow = styled.span`
	flex: none;
	width: 0;
	height: 0;
	border: ${({ $size = 4 }) => $size}px solid transparent;
	border-bottom-width: 0;
	border-top-color: ${({ $dim }) => ($dim ? '#aaa' : '#444')};
	${({ $up }) => $up && 'transform: rotate(180deg);'}
`;

const SectionArrow = styled(Arrow)`
	border-width: 7px 5px 0;
`;

const CheckBox = styled.input.attrs({ type: 'checkbox' })`
	appearance: none;
	flex: none;
	display: grid;
	place-items: center;
	width: 14px;
	height: 14px;
	margin: 0;
	border: 1px solid #aaa;
	background: #fff;

	&:checked::after {
		content: '';
		width: 4px;
		height: 8px;
		margin-bottom: 2px;
		border: solid #222;
		border-width: 0 2px 2px 0;
		transform: rotate(40deg);
	}
`;

const Highlight = styled.span`
	position: absolute;
	z-index: 5;
	inset: ${({ $inset }) => $inset};
	border: 6px solid #f80000;
	border-radius: 2px;
	pointer-events: none;
`;

const StepBadge = styled.span`
	position: absolute;
	z-index: 6;
	left: ${({ $left }) => $left}px;
	top: ${({ $top }) => $top}px;
	display: grid;
	place-items: center;
	width: 40px;
	height: 40px;
	border: 3px solid #fff;
	border-radius: 50%;
	background: #d40505;
	color: #fff;
	font: bold 28px/34px 'Liberation Sans', sans-serif;
	box-shadow: 0 1px 3px rgba(0, 0, 0, 0.4);
`;

/* ---------- toolbars ---------- */

const ToolbarRow = styled.div`
	display: flex;
	align-items: center;
	height: ${({ $height = 38 }) => $height}px;
	padding-bottom: 1px;
	border-bottom: 1px solid #aaa;
	background: linear-gradient(#f8f8f8, #ededed);
	overflow: hidden;
`;

const ToolButton = styled.button`
	flex: none;
	display: flex;
	align-items: center;
	justify-content: ${({ $cut }) => ($cut ? 'flex-end' : 'center')};
	width: ${({ $cut }) => $cut || 33}px;
	height: 32px;
	padding-right: ${({ $cut }) => ($cut ? 5 : 0)}px;
	${({ $on }) =>
		$on &&
		css`
			border: 1px solid #a5a5a5;
			border-radius: 3px;
			background: #dcdcdc;
		`}
`;

const MenuButton = styled.button`
	flex: none;
	display: grid;
	place-items: center;
	width: 12px;
	height: 32px;
`;

const Grip = styled.span`
	flex: none;
	width: 16px;
	height: 18px;
	padding: 0 5px;
	background: radial-gradient(circle, #aaa 1px, transparent 1px) center / 3px 3px content-box;
	background-clip: content-box;
`;

const Divider = styled.span`
	flex: none;
	width: 1px;
	height: 22px;
	margin: 0 3px;
	background: #ccc;
`;

const dimmed = (...names) => names.map((icon) => ({ icon, dim: true }));

const ROW_ONE = [
	{ icon: 'folder', cut: 8 }, 'save', 'layoutNew', 'layoutManager', 'style', '|',
	{ icon: 'hand', on: true }, 'pan', 'zoomIn', 'zoomOut', 'zoomFull', ...dimmed('zoomSelection'),
	'zoomLayer', 'zoomNative', 'zoomLast', ...dimmed('zoomNext'), 'mapNew', 'view3dNew', 'bookmarkNew',
	'bookmarks', 'clock', 'refresh', '|', 'identify', ...dimmed('table', 'abacus'),
	{ icon: 'gear', on: true }, 'sigma', 'measure', 'v', 'tips', ...dimmed('zoomGear'), 'vd', 'textNote', 'v',
];

const ROW_TWO = [
	{ icon: 'layerYellow', cut: 8 }, 'vectorNew', 'featherNew', 'chipNew', '-', 'virtualNew', '-', '|',
	...dimmed('pencils', 'pencil', 'save', 'vectorNew', 'vertex'), 'vd',
	...dimmed('modify', 'trash', 'cut', 'copy', 'paste', 'undo', 'redo'), '|',
	...dimmed('label', 'diagram'), '-', 'labelPin', 'labelRed', '-',
	...dimmed('labelPinGrey', 'labelEye', 'labelBox', 'labelTurn', 'labelEdit'), '|', '|',
	'pythonConsole', '|', 'help', '|',
];

const ROW_THREE = [{ icon: 'stackGrey', cut: 19, dim: true }, 'vd', 'deselect', 'v', 'selectPlace'];

const Toolbar = ({ items, height }) => (
	<ToolbarRow $height={height}>
		{items.map((item, i) => {
			if (item === '|') return <Grip key={i} />;
			if (item === '-') return <Divider key={i} />;
			if (item === 'v' || item === 'vd') {
				return (
					<MenuButton key={i} aria-label='menu'>
						<Arrow $dim={item === 'vd'} />
					</MenuButton>
				);
			}
			const { icon, on, dim, cut } = typeof item === 'string' ? { icon: item } : item;
			return (
				<ToolButton key={i} $on={on} $cut={cut} aria-label={icon}>
					<Icon name={icon} dim={dim} />
				</ToolButton>
			);
		})}
	</ToolbarRow>
);

/* ---------- docks ---------- */

const Page = styled.div`
	position: relative;
	display: flex;
	flex-direction: column;
	height: 100vh;
	overflow: hidden;
`;

const Workspace = styled.main`
	flex: 1;
	min-height: 0;
	display: grid;
	grid-template-columns: 389px minmax(0, 1fr) 74px;
	column-gap: 6px;
	padding-top: 1px;
`;

const Dock = styled.aside`
	display: flex;
	flex-direction: column;
	min-width: 0;
	min-height: 0;
	overflow: hidden;
`;

const DockHeader = styled.header`
	flex: none;
	display: flex;
	align-items: center;
	gap: 2px;
	height: ${({ $height = 20 }) => $height}px;
	padding-right: 2px;
	white-space: nowrap;
`;

const DockTitle = styled.span`
	flex: 1;
	margin-left: ${({ $left }) => $left}px;
`;

const DockTools = styled.div`
	flex: none;
	display: flex;
	align-items: center;
	gap: 9px;
	height: ${({ $height = 30 }) => $height}px;
	padding-left: ${({ $left = 0 }) => $left}px;
	overflow: hidden;
`;

const CutButton = styled.button`
	display: flex;
	justify-content: flex-end;
	width: 5px;
`;

const MenuPair = styled.span`
	display: flex;
	align-items: center;
	gap: 5px;
`;

const Splitter = styled.div`
	flex: none;
	height: 5px;
	width: 16px;
	margin: 0 auto;
	border-bottom: 1px dotted #aaa;
`;

const Panel = styled.div`
	border: 1px solid #a8a8a8;
	background: #fff;
	overflow: hidden;
	${({ $cutLeft }) => $cutLeft && 'border-left: 0;'}
	${({ $cutRight }) => $cutRight && 'border-right: 0;'}
	${({ $height }) => ($height ? `flex: none; height: ${$height}px;` : 'flex: 1; min-height: 0;')}
`;

const Row = styled.div`
	display: flex;
	align-items: center;
	gap: 6px;
	height: ${({ $height = 18 }) => $height}px;
	padding-left: ${({ $left = 1 }) => $left}px;
	font-size: ${({ $latin }) => ($latin ? 12 : 13)}px;
	white-space: nowrap;
	background: ${({ $on }) => ($on ? '#f0f0f0' : 'none')};
`;

const TreeArrow = styled(Arrow)`
	margin-right: 3px;
`;

const BROWSER = [
	['star', '즐겨찾기'],
	['bookmarks', '공간 북마크'],
	['home', '홈'],
	['drive', 'C:₩'],
	['drive', 'D:₩'],
	['drive', 'E:₩'],
	['drive', 'Z:₩'],
	['geopackage', 'GeoPackage'],
	['feather', 'SpatiaLite'],
	['postgis', 'PostGIS'],
	['hana', 'SAP HANA'],
	['mssql', 'MSSQL'],
	['oracle', 'Oracle'],
	['wms', 'WMS/WMTS'],
	['vectorTiles', 'Vector Tiles'],
	['xyz', 'XYZ Tiles'],
	['xyz', 'OpenStreetMap', 17],
	['wcs', 'WCS'],
	['wfs', 'WFS / OGC API - Features'],
	['ows', 'OWS'],
	['arcgis', 'ArcGIS REST Servers'],
	['geonode', 'GeoNode'],
];

const DockButtons = () => (
	<>
		<button aria-label='float'>
			<Icon name='dockFloat' size={12} />
		</button>
		<button aria-label='close'>
			<Icon name='dockClose' size={12} />
		</button>
	</>
);

const IconButtons = ({ names }) =>
	names.map((name) => (
		<button key={name} aria-label={name}>
			<Icon name={name} size={16} />
		</button>
	));

const LayerPanel = styled(Panel)`
	display: flex;
`;

const LayerList = styled.div`
	flex: 1;
	min-width: 0;
`;

const LayerRow = styled.label`
	display: flex;
	align-items: ${({ $first }) => ($first ? 'flex-end' : 'center')};
	gap: 7px;
	height: ${({ $first }) => ($first ? 12 : 18)}px;
	padding-left: 5px;
	overflow: hidden;
	white-space: nowrap;
	background: ${({ $on }) => ($on ? '#f0f0f0' : 'none')};
`;

const LayerName = styled.span`
	font-weight: ${({ $off }) => ($off ? 400 : 700)};
	font-style: ${({ $off }) => ($off ? 'italic' : 'normal')};
	color: ${({ $off }) => ($off ? '#777' : '#111')};
	text-decoration: ${({ $current }) => ($current ? 'underline' : 'none')};
`;

const BandName = styled.div`
	height: 16px;
	padding-left: 25px;
	line-height: 16px;
`;

const Ramp = styled.div`
	display: flex;
	gap: 7px;
	height: 97px;
	padding: 0 0 1px 25px;
`;

const RampBar = styled.span`
	width: 16px;
	background: linear-gradient(#d7191c, #fdae61 25%, #ffffbf 50%, #abdda4 75%, #2b83ba);
`;

const RampLabels = styled.span`
	display: flex;
	flex-direction: column;
	justify-content: space-between;
	font-size: 12px;
	line-height: 12px;
`;

const ScrollBar = styled.div`
	flex: none;
	display: flex;
	flex-direction: column;
	width: 14px;
	border-left: 1px solid #bbb;
	background: #fafafa;
`;

const ScrollButton = styled.button`
	display: grid;
	place-items: center;
	height: 13px;
`;

const ScrollThumb = styled.div`
	height: 22px;
	margin-bottom: auto;
	border: solid #bbb;
	border-width: 1px 0;
	background: #ececec;
`;

const Band = ({ name }) => (
	<>
		<BandName>{name}</BandName>
		<Ramp>
			<RampBar />
			<RampLabels>
				<span>110</span>
				<span>90</span>
			</RampLabels>
		</Ramp>
	</>
);

const Layer = ({ icon = 'raster', name, checked, current, first }) => (
	<LayerRow $on={current} $first={first}>
		<CheckBox defaultChecked={checked} />
		<Icon name={icon} size={14} />
		<LayerName $off={!checked} $current={current}>
			{name}
		</LayerName>
	</LayerRow>
);

const LeftDock = () => (
	<Dock>
		<DockHeader>
			<DockTitle $left={-4}>색기</DockTitle>
			<DockButtons />
		</DockHeader>
		<DockTools>
			<CutButton aria-label='add layer'>
				<Icon name='addGreen' size={16} />
			</CutButton>
			<IconButtons names={['refresh', 'funnel', 'collapse', 'info']} />
		</DockTools>
		<Panel $height={416} $cutLeft>
			{BROWSER.map(([icon, name, left]) => (
				<Row key={name} $left={left} $latin={/^[A-Z][\w /-]+$/.test(name)}>
					<Icon name={icon} size={16} />
					{name}
				</Row>
			))}
		</Panel>
		<Splitter />
		<DockHeader>
			<DockTitle $left={-4}>이어</DockTitle>
			<DockButtons />
		</DockHeader>
		<DockTools $height={31}>
			<CutButton aria-label='style'>
				<Icon name='brush' size={16} />
			</CutButton>
			<IconButtons names={['addGroup', 'eye', 'funnelMenu']} />
			<MenuPair>
				<Icon name='expression' size={16} dim />
				<Arrow $dim />
			</MenuPair>
			<IconButtons names={['expand', 'collapse', 'removeLayer']} />
		</DockTools>
		<LayerPanel $cutLeft>
			<LayerList>
				<Layer icon='line' name='지형 entities' checked first />
				<Row $left={5}>
					<Icon name='table' size={16} />
					<LayerName>고래스터 레이어 유일값 보</LayerName>
				</Row>
				<Layer name='테이블 재분류' />
				<Layer name='마스크래스터자르기' />
				<Band name='밴드 1 (Gray)' />
				<Layer icon='rasterActive' name='tin생성' checked current />
				<Band name='밴드 1' />
				<Layer name='tin생성 복사' checked />
			</LayerList>
			<ScrollBar>
				<ScrollButton aria-label='up'>
					<Arrow $up />
				</ScrollButton>
				<ScrollThumb />
				<ScrollButton aria-label='down'>
					<Arrow />
				</ScrollButton>
			</ScrollBar>
		</LayerPanel>
	</Dock>
);

const SearchBox = styled.label`
	flex: none;
	display: flex;
	align-items: center;
	gap: 7px;
	height: 22px;
	padding-left: 8px;
	border: 1px solid #a8a8a8;
	border-width: ${({ $plain }) => ($plain ? 0 : '1px 0 1px 1px')};
	background: #fff;

	input {
		flex: 1;
		min-width: 0;
		padding: 0;
		border: 0;
		outline: 0;
		background: none;
	}
`;

const TOOLBOX = [
	[0, 'clock', '최근에'],
	[1, 'gear', '래스터'],
	[0, 'q', '래스터'],
	[1, 'gear', '구역'],
	[1, 'gear', '래스터'],
	[1, 'gearStrong', '래스터', true],
	[1, 'zonal', '셀'],
	[0, 'q', '벡터'],
	[1, 'gear', 'Me'],
	[1, 'gear', 'Zo'],
	[0, 'q', '벡터'],
	[1, 'sigmaBlue', '범'],
	[1, 'sigmaBlue', '필'],
	[0, 'leaf', 'GRASS'],
];

const HtmlPanel = styled(Panel)`
	padding: 2px 0 0 4px;
	line-height: 14px;
	font-size: 12px;
	white-space: nowrap;

	b {
		font-size: 13px;
	}

	a {
		color: #1a1a8c;
	}
`;

const RightDock = () => (
	<Dock>
		<DockHeader>
			<DockTitle $left={4}>공간 처리 툴박스</DockTitle>
		</DockHeader>
		<DockTools $left={7}>
			<IconButtons names={['gears', 'pythonMenu', 'clock']} />
		</DockTools>
		<SearchBox>
			<Icon name='search' size={13} />
			<input aria-label='search' defaultValue='통계' />
		</SearchBox>
		<Panel $height={351} $cutRight>
			{TOOLBOX.map(([level, icon, name, on], i) => (
				<Row key={i} $left={level ? 43 : 6} $on={on} $latin={/^[A-Z]/.test(name)}>
					{!level && <TreeArrow />}
					<Icon name={icon} size={16} />
					{name}
				</Row>
			))}
			<Row $left={26} $height={15}>
				<TreeArrow />
				래스터
			</Row>
			{[1, 2, 3, 4, 5].map((n) => (
				<Row key={n} $left={65}>
					<Icon name='leaf' size={16} />
				</Row>
			))}
		</Panel>
		<DockHeader $height={25}>
			<DockTitle $left={4}>결과 뷰어</DockTitle>
		</DockHeader>
		<Panel $height={200} $cutRight>
			{['통계 정보', '유일 값 보', '통계 정보', '유일 값 보'].map((name, i) => (
				<Row key={i} $left={3} $on={i === 0}>
					<Icon name={i === 0 ? 'gearStrong' : 'gear'} size={16} />
					{name}
				</Row>
			))}
		</Panel>
		<DockHeader $height={4} />
		<HtmlPanel $cutRight>
			<b>Algorithm:</b>
			<br />
			<b>File path:</b> <a href='#c'>C:</a>
			<br />
			<a href='#c'>통계.html</a>
		</HtmlPanel>
	</Dock>
);

/* ---------- map ---------- */

const Center = styled.section`
	display: flex;
	flex-direction: column;
	min-width: 0;
	border: 1px solid #a0a0a0;
	background: #fff;
`;

const MessageBar = styled.div`
	flex: none;
	display: flex;
	align-items: center;
	height: 27px;
	padding: 0 22px 0 9px;
	border-bottom: 1px solid #7d9a74;
	background: #dff0d8;
	white-space: nowrap;

	p {
		flex: 1;
		margin: 0 0 0 10px;
	}

	b {
		font-size: 14px;
	}

	a {
		font-size: 14px;
		color: #0b7a1b;
	}
`;

const MessageSteps = styled.span`
	display: grid;
	gap: 2px;
	margin-right: 31px;

	button {
		width: 14px;
		height: 10px;
		border: solid #888;
		border-width: 0 1px 1px 0;
		background: #e9e9e9;
	}
`;

const MapSvg = styled.svg`
	flex: 1;
	min-height: 0;
	width: 100%;
`;

const CONTOURS = [
	'M0 145C60 185 130 230 160 260C180 280 175 300 150 325C110 360 80 370 82 400C85 470 130 560 165 620C195 670 200 710 185 750C160 800 80 840 0 885',
	'M150 130C240 165 360 190 405 225C430 245 425 265 400 285C340 330 180 370 167 400C165 440 230 530 270 610C295 660 295 710 285 750C260 800 120 890 0 955',
	'M375 133C440 165 510 190 525 225C535 255 520 275 480 295C400 340 270 375 255 420C245 470 330 560 370 640C395 690 395 730 375 760C320 850 130 980 0 1048',
	'M500 133L560 175',
	'M560 325C470 360 340 400 325 440C315 480 400 570 450 640C490 700 495 740 475 780C400 890 250 990 150 1050C80 1085 10 1110 22 1140C35 1170 120 1220 200 1280C300 1360 400 1420 440 1460C465 1490 480 1520 500 1556',
	'M560 385C480 410 430 440 425 475C430 520 490 590 560 680',
	'M560 455C510 475 508 500 520 520C525 545 535 555 560 590',
	'M0 470C30 560 75 630 84 700C85 760 70 790 40 815L0 840',
	'M560 850C480 930 420 985 350 1035C260 1095 150 1130 158 1155C165 1190 300 1270 420 1350C480 1390 520 1440 560 1490L620 1556',
	'M560 980C470 1060 310 1160 305 1190C310 1240 350 1270 420 1330L560 1425L720 1556',
	'M560 1100C490 1150 420 1180 424 1215C440 1260 500 1290 560 1345C700 1430 760 1490 800 1556',
	'M0 1228C40 1250 70 1290 110 1330C200 1400 340 1480 420 1556',
	'M0 1310C80 1380 180 1470 270 1556',
	'M0 1400C60 1450 130 1510 185 1556',
	'M0 1480L85 1556M0 1530L28 1556',
	'M700 1380C780 1430 830 1490 870 1556',
];

const LOWER_CONTOURS = [
	'M-10 172L105 381M80 172C120 240 160 300 185 381M145 172C190 230 205 300 220 381',
	'M220 172C240 250 260 320 270 381M323 172L345 381M645 172L638 381M677 172L674 381M708 172L710 381',
	'M755 172V381M810 172L808 381M867 172L870 381M930 172L935 381M986 172V381M1032 172L1030 381',
	'M1084 172L1077 381M1145 172L1135 381M1200 172L1185 381M1258 172L1245 381',
	'M1307 172C1290 250 1295 320 1312 381M1360 180C1310 230 1320 310 1380 360',
];

const MapCanvas = () => (
	<MapSvg viewBox='0 0 1032 823' preserveAspectRatio='xMinYMin slice'>
		<defs>
			<filter id='soft' x='-20%' y='-20%' width='140%' height='140%' colorInterpolationFilters='sRGB'>
				<feGaussianBlur stdDeviation='20' />
			</filter>
			<linearGradient id='sand'>
				<stop offset='0' stopColor='#f0806a' stopOpacity='0' />
				<stop offset='.25' stopColor='#f6a07c' />
				<stop offset='.38' stopColor='#f6c38c' />
				<stop offset='.65' stopColor='#fdd79a' />
				<stop offset='.96' stopColor='#fbc48a' />
				<stop offset='1' stopColor='#e98b70' />
			</linearGradient>
			<radialGradient id='glow'>
				<stop offset='0' stopColor='#ffffd2' />
				<stop offset='.4' stopColor='#fffbc4' stopOpacity='.8' />
				<stop offset='1' stopColor='#ffe9a8' stopOpacity='0' />
			</radialGradient>
			<clipPath id='extent'>
				<rect y='61' width='885' height='762' />
			</clipPath>
		</defs>
		<g clipPath='url(#extent)'>
			<rect y='61' width='885' height='762' fill='#e05c61' />
			<g transform='translate(0 -4) scale(.3333 .5313)'>
				<g filter='url(#soft)'>
					<path d='M620 200L420 255L230 335L175 375L300 400L430 440L620 430z' fill='#98080f' opacity='.65' />
					<path d='M0 310L170 290L200 340L80 380L0 350z' fill='#b02a32' opacity='.3' />
					<path d='M80 380L300 420L600 430V620L480 660L200 620L160 560z' fill='#b52a32' opacity='.35' />
					<path d='M140 620L600 600V1190L300 1170L20 1130L-30 950V880z' fill='#ab2028' opacity='.45' />
					<path d='M-30 870L160 720L220 740L160 820L-30 940z' fill='#9a0a12' opacity='.5' />
					<path d='M620 1110L460 1180L380 1200L620 1210z' fill='#9a1018' opacity='.6' />
					<path d='M300 1190L240 1220L330 1240z' fill='#9a1018' opacity='.35' />
				</g>
				<path d='M-20 840L70 780L95 790L50 850L-20 895z' fill='#850006' opacity='.8' filter='url(#soft)' />
				<path d='M0 132H600' stroke='#9c1016' strokeWidth='5' />
			</g>
			<g transform='translate(304 696) scale(.4209 .3333)'>
				<path d='M200 140L330 140L310 400H200z' fill='#a8151b' opacity='.3' filter='url(#soft)' />
				<rect x='345' y='160' width='290' height='230' fill='url(#sand)' />
				<ellipse cx='535' cy='215' rx='100' ry='130' fill='url(#glow)' />
			</g>
			<g fill='none' stroke='#fff' strokeOpacity='.5'>
				<g transform='translate(0 -4) scale(.3333 .5313)'>
					{CONTOURS.map((d) => (
						<path key={d} d={d} vectorEffect='non-scaling-stroke' />
					))}
				</g>
				<g transform='translate(304 696) scale(.4209 .3333)'>
					{LOWER_CONTOURS.map((d) => (
						<path key={d} d={d} vectorEffect='non-scaling-stroke' />
					))}
				</g>
			</g>
		</g>
	</MapSvg>
);

/* ---------- layer properties window ---------- */

const Window = styled.div`
	position: absolute;
	top: 161px;
	left: 576px;
	display: flex;
	flex-direction: column;
	width: 773px;
	height: 737px;
	border: 1px solid #555;
	background: #f0f0f0;
	box-shadow: 3px 5px 18px rgba(0, 0, 0, 0.4);
`;

const TitleBar = styled.header`
	flex: none;
	display: flex;
	align-items: center;
	gap: 5px;
	height: 30px;
	padding: 0 9px 2px 8px;
	background: #fff;

	button {
		margin-left: auto;
	}
`;

const WindowBody = styled.div`
	flex: 1;
	min-height: 0;
	display: grid;
	grid-template-columns: 150px 5px minmax(0, 1fr);
	padding-right: 3px;
`;

const Nav = styled.nav`
	display: flex;
	flex-direction: column;
	background: #5c5c5c;
`;

const NavList = styled.div`
	padding-top: 6px;
`;

const NavButton = styled.button`
	position: relative;
	display: flex;
	align-items: center;
	gap: 8px;
	width: 100%;
	height: 36px;
	padding-left: ${({ $on }) => ($on ? 8 : 5)}px;
	background: ${({ $on }) => ($on ? '#f0f0f0' : 'none')};
	color: ${({ $on }) => ($on ? '#111' : '#f4f4f4')};
`;

const BodyGrip = styled.span`
	align-self: center;
	justify-self: end;
	width: 3px;
	height: 18px;
	border-left: 1px dotted #aaa;
`;

const Content = styled.div`
	display: flex;
	flex-direction: column;
	min-height: 0;
`;

const Section = styled.section`
	position: relative;
	display: flex;
	flex-direction: column;
	${({ $grow }) => $grow && 'flex: 1; min-height: 0;'}
`;

const SectionTitle = styled.h3`
	flex: none;
	display: flex;
	align-items: center;
	gap: 9px;
	height: ${({ $height = 24 }) => $height}px;
	margin: 0;
	padding-left: 2px;
	font-size: 14px;
	line-height: 18px;
	font-weight: 700;
`;

const GroupBox = styled.div`
	flex: 1;
	min-height: 0;
	display: flex;
	flex-direction: column;
	gap: ${({ $gap = 0 }) => $gap}px;
	padding: ${({ $pad }) => $pad};
	border: 1px solid #d9d9d9;
	border-radius: 2px;
	background: #ebebeb;
`;

const Line = styled.div`
	flex: none;
	display: flex;
	align-items: center;
	gap: ${({ $gap = 6 }) => $gap}px;
	height: ${({ $height = 22 }) => $height}px;
	padding-right: ${({ $right = 0 }) => $right}px;

	label {
		display: flex;
		align-items: center;
		gap: 5px;
	}
`;

const Slider = styled.input.attrs({ type: 'range' })`
	appearance: none;
	flex: 1;
	height: 14px;
	margin: 0;
	background: none;

	&::-webkit-slider-runnable-track {
		height: 6px;
		border: 1px solid #b5b5b5;
		border-radius: 2px;
		background: linear-gradient(90deg, #2482d6 70%, #dcdcdc 70%);
	}

	&::-webkit-slider-thumb {
		appearance: none;
		width: 13px;
		height: 13px;
		margin-top: -5px;
		border: 1px solid #999;
		border-radius: 3px;
		background: #fff;
	}
`;

const SpinBox = styled.span`
	display: flex;
	align-items: center;
	width: 100px;
	height: 20px;
	padding-left: 4px;
	border: 1px solid #a8a8a8;
	border-radius: 2px;
	background: #fff;

	input {
		flex: 1;
		min-width: 0;
		padding: 0;
		border: 0;
		outline: 0;
		background: none;
		font-size: 12px;
	}
`;

const SpinArrows = styled.span`
	display: grid;
	place-content: center;
	gap: 4px;
	width: 14px;
	height: 100%;
	margin-left: 10px;
	border-left: 1px solid #bbb;
`;

const TextInput = styled.input`
	flex: 1;
	min-width: 0;
	height: 22px;
	border: 1px solid #a8a8a8;
	border-radius: 2px;
	background: #fff;
`;

const SelectBox = styled.span`
	flex: 1;
	display: grid;
	align-items: center;

	select {
		grid-area: 1 / 1;
		appearance: none;
		height: 21px;
		padding: 0 4px;
		border: 1px solid #a8a8a8;
		border-radius: 2px;
		background: linear-gradient(#fdfdfd, #f0f0f0);
	}

	span {
		grid-area: 1 / 1;
		justify-self: end;
		margin-right: 7px;
		pointer-events: none;
	}
`;

const ListArea = styled.div`
	flex: 1;
	min-height: 0;
	display: flex;
	gap: 6px;
	margin-top: 3px;
`;

const TableFrame = styled.div`
	flex: 1;
	border: 1px solid #a8a8a8;
	background: #fff;
`;

const Table = styled.table`
	width: 100%;
	border-collapse: collapse;
	table-layout: fixed;

	th {
		height: 18px;
		padding: 0;
		border-right: 1px solid #c4c4c4;
		border-bottom: 1px solid #a8a8a8;
		background: linear-gradient(#fff, #f0f0f0);
		font-weight: 400;
		line-height: 17px;
	}

	th:last-child {
		border-right: 0;
	}
`;

const SideButtons = styled.div`
	display: flex;
	flex-direction: column;
	gap: 5px;
	padding-top: 5px;
`;

const SmallButton = styled.button`
	display: grid;
	place-items: center;
	width: 24px;
	height: 24px;
	border: 1px solid #b3b3b3;
	border-radius: 2px;
	background: linear-gradient(#fff, #f2f2f2);
`;

const Footer = styled.footer`
	flex: none;
	display: flex;
	gap: 6px;
	padding: 6px 0 3px;
`;

const PushButton = styled.button`
	position: relative;
	display: flex;
	align-items: center;
	justify-content: center;
	gap: 16px;
	width: 80px;
	height: 21px;
	padding-bottom: 2px;
	border: 1px solid #aaa;
	border-radius: 2px;
	background: ${({ $primary }) =>
		$primary ? 'linear-gradient(#fdfeff, #e6eef8)' : 'linear-gradient(#fefefe, #f0f0f0)'};

	&:first-child {
		margin-right: auto;
		padding-left: 10px;
	}
`;

const NAV = [
	['info', '정보'],
	['source', '원본'],
	['symbol', '심볼'],
	['transparency', '투명도'],
	['histogram', '히스토그램'],
	['brush', '렌더링'],
	['clockWhite', '시계열'],
	['pyramids', '피라미드'],
	['metadata', '메타데이터'],
	['legend', '범례'],
	['server', 'QGIS 서버'],
];

const LayerProperties = () => (
	<Window role='dialog'>
		<TitleBar>
			<Icon name='q' size={16} />
			레이어 속성 — tin생성 — 투명도
			<button aria-label='close'>
				<Icon name='close' size={13} />
			</button>
		</TitleBar>
		<WindowBody>
			<Nav>
				<SearchBox $plain>
					<Icon name='search' size={13} />
					<input aria-label='filter' />
				</SearchBox>
				<NavList>
					{NAV.map(([icon, name]) => (
						<NavButton key={name} $on={icon === 'transparency'}>
							<Icon name={icon} />
							{name}
							{icon === 'transparency' && (
								<>
									<Highlight $inset='-5px -7px -6px -2px' />
									<StepBadge $left={-51} $top={0}>
										1
									</StepBadge>
								</>
							)}
						</NavButton>
					))}
				</NavList>
			</Nav>
			<BodyGrip />
			<Content>
				<Section>
					<SectionTitle $height={21}>
						<SectionArrow />
						전역 불투명도
					</SectionTitle>
					<GroupBox $pad='10px 11px 12px'>
						<Line $gap={4}>
							<Slider aria-label='전역 불투명도' defaultValue={70} />
							<SpinBox>
								<input aria-label='%' defaultValue='70,0 %' />
								<Icon name='clear' size={13} />
								<SpinArrows>
									<Arrow $up />
									<Arrow />
								</SpinArrows>
							</SpinBox>
						</Line>
					</GroupBox>
					<Highlight $inset='-3px -5px -6px -9px' />
					<StepBadge $left={-55} $top={-5}>
						2
					</StepBadge>
				</Section>
				<Section>
					<SectionTitle>
						<SectionArrow />
						NODATA 값
					</SectionTitle>
					<GroupBox $pad='8px 11px 12px 10px' $gap={7}>
						<Line $height={18} $gap={12}>
							<label>
								<CheckBox defaultChecked />
								NODATA 값
							</label>
							<span>-9999</span>
						</Line>
						<Line>
							<label htmlFor='nodata'>추가적인 NODATA 값</label>
							<TextInput id='nodata' />
						</Line>
					</GroupBox>
				</Section>
				<Section $grow>
					<SectionTitle>
						<SectionArrow />
						사용자 정의 투명 옵션
					</SectionTitle>
					<GroupBox $pad='9px 11px 10px 10px'>
						<Line $height={21} $right={30}>
							<label htmlFor='band'>투명 밴드</label>
							<SelectBox>
								<select id='band'>
									<option>없음</option>
								</select>
								<Arrow />
							</SelectBox>
						</Line>
						<Line $height={22}>투명도 픽셀 목록</Line>
						<ListArea>
							<TableFrame>
								<Table>
									<thead>
										<tr>
											<th>시작</th>
											<th>끝</th>
											<th>투명도</th>
										</tr>
									</thead>
								</Table>
							</TableFrame>
							<SideButtons>
								{['plus', 'pick', 'minus', 'tableBlue', 'folderOpen', 'save'].map((name) => (
									<SmallButton key={name} aria-label={name}>
										<Icon name={name} size={16} />
									</SmallButton>
								))}
							</SideButtons>
						</ListArea>
					</GroupBox>
				</Section>
				<Footer>
					<PushButton>
						스타일
						<Arrow $size={3} />
					</PushButton>
					<PushButton $primary>
						확인
						<Highlight $inset='-6px -4px -6px -8px' />
						<StepBadge $left={-56} $top={-17}>
							3
						</StepBadge>
					</PushButton>
					<PushButton>취소</PushButton>
					<PushButton>적용</PushButton>
					<PushButton>도움말</PushButton>
				</Footer>
			</Content>
		</WindowBody>
	</Window>
);

const StatusBar = styled.footer`
	flex: none;
	display: flex;
	justify-content: space-between;
	height: 6px;
	padding: 4px 80px 0 0;
	overflow: hidden;

	span {
		height: 22px;
		border: 1px solid #b0b0b0;
		border-radius: 2px;
	}

	span:first-child {
		width: 288px;
		background: #fff;
	}

	span:last-child {
		width: 250px;
	}
`;

export default function App() {
	return (
		<Page>
			<GlobalStyle />
			<Toolbar items={ROW_ONE} />
			<Toolbar items={ROW_TWO} height={39} />
			<Toolbar items={ROW_THREE} />
			<Workspace>
				<LeftDock />
				<Center>
					<MessageBar>
						<Icon name='check' />
						<p>
							<b>레이어를 내보냄:</b> <a href='#export'>C:₩Users₩JHJ₩Desktop₩경사표고₩구역계.dxf.shp</a>에
							벡터 레이어를 성공적으로 저장했습니다
						</p>
						<MessageSteps>
							<button aria-label='previous' />
							<button aria-label='next' />
						</MessageSteps>
						<button aria-label='close message'>
							<Icon name='closeRound' size={18} />
						</button>
					</MessageBar>
					<MapCanvas />
				</Center>
				<RightDock />
			</Workspace>
			<StatusBar>
				<span />
				<span />
			</StatusBar>
			<LayerProperties />
		</Page>
	);
}
